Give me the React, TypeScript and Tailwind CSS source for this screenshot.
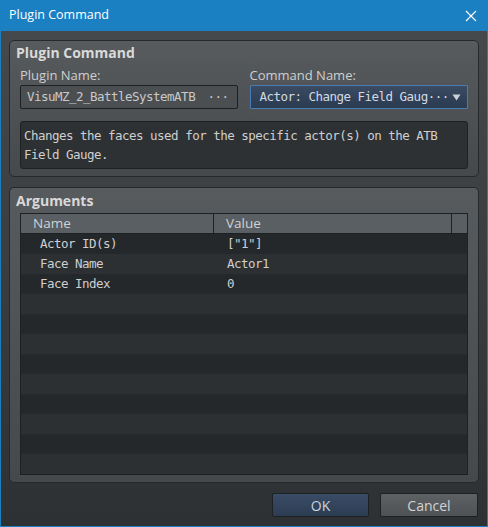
import React from "react";

const mono = "font-['DejaVu_Sans_Mono','Liberation_Mono',monospace] text-[12.5px] tracking-[-0.52px]";
const sans = "font-['Open_Sans','Noto_Sans',sans-serif]";

export default function App() {
  const rows: [string, string][] = [
    ["Actor ID(s)", '["1"]'],
    ["Face Name", "Actor1"],
    ["Face Index", "0"],
  ];
  const allRows = Array.from({ length: 12 }, (_, i) => rows[i] ?? ["", ""]);
  return (
    <div className="w-[488px] h-[527px] bg-[#1a80c2] flex flex-col overflow-hidden">
      {/* Title bar */}
      <div className="h-[31px] flex items-center justify-between pl-[9px] pr-[11px] shrink-0">
        <span className={`${sans} text-[12.5px] text-white`}>Plugin Command</span>
        <svg width="12" height="12" viewBox="0 0 12 12">
          <path d="M1 1 L11 11 M11 1 L1 11" stroke="white" strokeWidth="1.2" />
        </svg>
      </div>
      {/* Body */}
      <div className="mx-[1px] mb-[1px] flex-1 bg-gradient-to-b from-[#46494c] to-[#2e3134] flex flex-col px-2 pt-[9px]">
        {/* Group 1 */}
        <div className="h-[137px] rounded-[5px] border border-[#26292b] bg-gradient-to-b from-[#575b5e] to-[#45494c] flex flex-col">
          <div className={`${sans} h-[24px] leading-[24px] pl-[6px] text-[14px] font-bold text-[#d9d9d9]`}>Plugin Command</div>
          <div className="flex px-[10px] gap-[12px]">
            <div className="w-[218px] flex flex-col">
              <div className={`${sans} h-[20px] leading-[20px] text-[13px] text-[#cfcfcf]`}>Plugin Name:</div>
              <div className="h-[24px] rounded-[2px] border border-[#1e2123] bg-[#4b4f52] flex items-center justify-between pl-[6px] pr-[8px]">
                <span className={`${mono} text-[#c9c9c9]`}>VisuMZ_2_BattleSystemATB</span>
                <span className={`${mono} text-[#c9c9c9]`}>···</span>
              </div>
            </div>
            <div className="w-[219px] flex flex-col">
              <div className={`${sans} h-[20px] leading-[20px] text-[13px] text-[#cfcfcf]`}>Command Name:</div>
              <div className="h-[24px] rounded-[1px] border border-[#4a7cb3] bg-gradient-to-b from-[#3a4b62] to-[#2a3a50] flex items-center justify-between pl-[9px] pr-[6px]">
                <span className={`${mono} text-[#d3dae2]`}>Actor: Change Field Gaug···</span>
                <svg width="9" height="7" viewBox="0 0 9 7">
                  <path d="M0.5 0.5 L8.5 0.5 L4.5 6.5 Z" fill="#c9d0d8" />
                </svg>
              </div>
            </div>
          </div>
          <div className="mx-[10px] mt-[12px] h-[48px] rounded-[3px] border border-[#1e2123] bg-[#2e3134] px-[3px] pt-[4px]">
            <div className={`${mono} leading-[19px] text-[#cfcfcf]`}>
              Changes the faces used for the specific actor(s) on the ATB
              <br />
              Field Gauge.
            </div>
          </div>
        </div>
        {/* Group 2 */}
        <div className="mt-[10px] h-[296px] rounded-[5px] border border-[#26292b] bg-gradient-to-b from-[#575b5e] to-[#45494c] flex flex-col">
          <div className={`${sans} h-[25px] leading-[25px] pl-[6px] text-[14px] font-bold text-[#d9d9d9]`}>Arguments</div>
          <div className="mx-[10px] border border-[#1e2123] bg-[#2c3033] flex flex-col">
            <div className={`h-[20px] flex bg-[#5a5f63] border-b border-[#1e2123] ${sans} text-[13.5px] text-[#cfd2d4]`}>
              <div className="w-[193px] border-r border-[#1e2123] pl-[12px] leading-[19px]">Name</div>
              <div className="w-[238px] border-r border-[#1e2123] pl-[12px] leading-[19px]">Value</div>
              <div className="flex-1" />
            </div>
            {allRows.map(([n, v], i) => (
              <div
                key={i}
                className={`h-[20px] flex items-center ${i % 2 === 0 ? "bg-[#25282b]" : "bg-[#2c3033]"} ${mono} text-[#cfcfcf]`}
              >
                <div className="w-[194px] pl-[19px]">{n}</div>
                <div className="pl-[12px]">{v}</div>
              </div>
            ))}
          </div>
        </div>
        {/* Buttons */}
        <div className="mt-[10px] flex justify-end gap-[11px] pr-[1px]">
          <button className={`w-[97px] h-[24px] rounded-[2px] border border-[#1e2123] bg-gradient-to-b from-[#3a4c66] to-[#2c3c52] ${sans} text-[14px] text-[#c9d3dd]`}>
            OK
          </button>
          <button className={`w-[98px] h-[24px] rounded-[2px] border border-[#1e2123] bg-gradient-to-b from-[#5d6164] to-[#4e5255] ${sans} text-[14px] text-[#d2d2d2]`}>
            Cancel
          </button>
        </div>
      </div>
    </div>
  );
}
